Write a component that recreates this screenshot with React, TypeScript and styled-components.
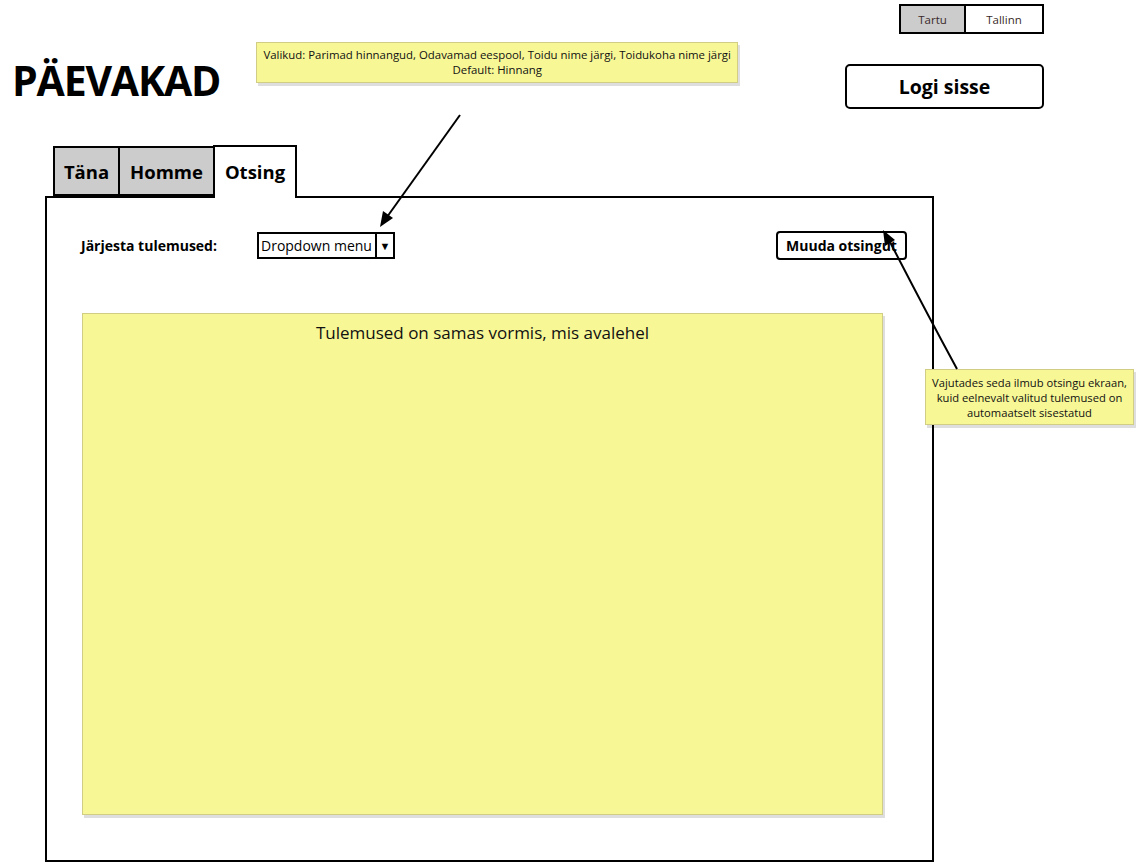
import React from "react";
import styled, { createGlobalStyle } from "styled-components";

const Global = createGlobalStyle`
  html, body { margin: 0; padding: 0; background: #fff; }
  body { font-family: "Open Sans", "Noto Sans", sans-serif; color: #000; }
  * { box-sizing: border-box; }
`;

const Page = styled.div`
  position: relative;
  width: 1147px;
  height: 868px;
  overflow: hidden;
`;

const Header = styled.header`
  display: flex;
  align-items: flex-start;
  height: 146px;
`;

const Title = styled.h1`
  margin: 60px 0 0 12px;
  font-size: 41px;
  line-height: 41px;
  font-weight: 700;
  letter-spacing: -1.2px;
`;

const Sticky = styled.div`
  background: #f7f796;
  border: 1px solid #d2cd84;
  box-shadow: 2px 3px 0 rgba(0, 0, 0, 0.13);
  text-align: center;
  color: #111;
`;

const TopNote = styled(Sticky)`
  margin: 42px 0 0 36px;
  width: 482px;
  height: 41px;
  padding-top: 4px;
  font-size: 11.4px;
  line-height: 15px;
`;

const SideNote = styled(Sticky)`
  position: absolute;
  left: 925px;
  top: 369px;
  width: 209px;
  height: 56px;
  padding-top: 5px;
  font-size: 11.2px;
  line-height: 15px;
`;

const RightCol = styled.div`
  margin: 4px 103px 0 auto;
  display: flex;
  flex-direction: column;
  align-items: flex-end;
  gap: 30px;
`;

const Toggle = styled.div`
  display: flex;
  height: 30px;
  border: 2px solid #000;
`;

const Seg = styled.div<{ $on?: boolean; $w: number }>`
  width: ${(p) => p.$w}px;
  background: ${(p) => (p.$on ? "#cccccc" : "#fff")};
  display: flex;
  align-items: center;
  justify-content: center;
  font-size: 11.5px;
  color: #3a2a2a;
  & + & { border-left: 2px solid #000; }
`;

const LoginButton = styled.button`
  width: 199px;
  height: 45px;
  border: 2px solid #000;
  border-radius: 5px;
  background: #fff;
  font-family: inherit;
  font-size: 19.5px;
  font-weight: 700;
  color: #000;
  padding: 0;
`;

const TabBar = styled.nav`
  display: flex;
  align-items: flex-end;
  margin-left: 53px;
  height: 50px;
  position: relative;
  z-index: 1;
`;

const Tab = styled.div<{ $active?: boolean; $w: number }>`
  width: ${(p) => p.$w}px;
  height: ${(p) => (p.$active ? "53px" : "50px")};
  margin-bottom: ${(p) => (p.$active ? "-2px" : "0")};
  background: ${(p) => (p.$active ? "#fff" : "#cccccc")};
  border: 2px solid #000;
  border-bottom: ${(p) => (p.$active ? "none" : "2px solid #000")};
  display: flex;
  align-items: ${(p) => (p.$active ? "flex-start" : "center")};
  padding-top: ${(p) => (p.$active ? "12px" : "0")};
  justify-content: center;
  font-size: 18.5px;
  font-weight: 700;
  & + & { margin-left: -2px; }
`;

const Panel = styled.section`
  margin-left: 45px;
  width: 889px;
  height: 666px;
  border: 2px solid #000;
  padding: 33px 25px 0 34px;
`;

const Controls = styled.div`
  display: flex;
  align-items: center;
  height: 28px;
`;

const Label = styled.span`
  width: 176px;
  font-size: 14px;
  font-weight: 700;
`;

const Dropdown = styled.div`
  display: flex;
  width: 138px;
  height: 27px;
  border: 2px solid #000;
`;

const DropText = styled.span`
  flex: 1;
  font-size: 14px;
  line-height: 23px;
  padding-left: 2px;
  white-space: nowrap;
`;

const DropBtn = styled.span`
  width: 18px;
  border-left: 2px solid #000;
  display: flex;
  align-items: center;
  justify-content: center;
  font-size: 11px;
`;

const EditButton = styled.button`
  margin-left: auto;
  width: 131px;
  height: 29px;
  border: 2px solid #000;
  border-radius: 4px;
  background: #fff;
  font-family: inherit;
  font-size: 14px;
  font-weight: 700;
  color: #000;
  padding: 0;
`;

const Results = styled(Sticky)`
  margin: 54px 0 0 1px;
  width: 801px;
  height: 502px;
  padding-top: 7px;
  font-size: 17px;
  line-height: 23px;
`;

const Arrows = styled.svg`
  position: absolute;
  left: 0;
  top: 0;
  width: 1147px;
  height: 868px;
  pointer-events: none;
  z-index: 5;
`;

export default function App() {
  return (
    <Page>
      <Global />
      <Header>
        <Title>PÄEVAKAD</Title>
        <TopNote>
          Valikud: Parimad hinnangud, Odavamad eespool, Toidu nime järgi, Toidukoha nime järgi
          <br />
          Default: Hinnang
        </TopNote>
        <RightCol>
          <Toggle>
            <Seg $on $w={63}>Tartu</Seg>
            <Seg $w={78}>Tallinn</Seg>
          </Toggle>
          <LoginButton>Logi sisse</LoginButton>
        </RightCol>
      </Header>
      <TabBar>
        <Tab $w={67}>Täna</Tab>
        <Tab $w={97}>Homme</Tab>
        <Tab $active $w={84}>Otsing</Tab>
      </TabBar>
      <Panel>
        <Controls>
          <Label>Järjesta tulemused:</Label>
          <Dropdown>
            <DropText>Dropdown menu</DropText>
            <DropBtn>▼</DropBtn>
          </Dropdown>
          <EditButton>Muuda otsingut</EditButton>
        </Controls>
        <Results>Tulemused on samas vormis, mis avalehel</Results>
      </Panel>
      <SideNote>
        Vajutades seda ilmub otsingu ekraan,
        <br />
        kuid eelnevalt valitud tulemused on
        <br />
        automaatselt sisestatud
      </SideNote>
      <Arrows viewBox="0 0 1147 868">
        <line x1="460" y1="115" x2="387" y2="217" stroke="#000" strokeWidth="2" />
        <polygon points="380,227 383,211 393,218" fill="#000" />
        <path d="M957 369 Q 925 310 889 240" stroke="#000" strokeWidth="2" fill="none" />
        <polygon points="883,230 885,246 895,240" fill="#000" />
      </Arrows>
    </Page>
  );
}
